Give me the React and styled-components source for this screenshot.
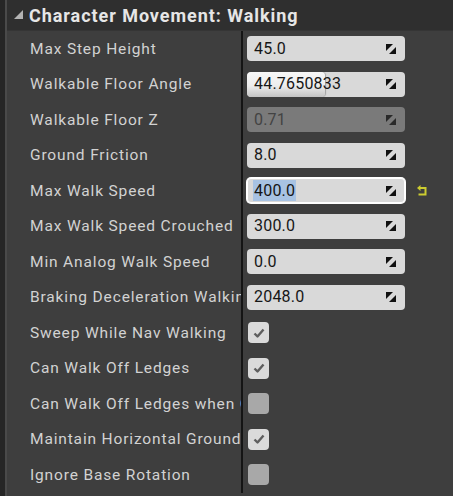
import React from "react";
import styled, { createGlobalStyle } from "styled-components";

const Global = createGlobalStyle`
  html, body { margin: 0; padding: 0; background: #3e3e3e; }
  body { font-family: Roboto, "Noto Sans", sans-serif; }
`;

const Frame = styled.div`
  width: 453px;
  height: 496px;
  box-sizing: border-box;
  border-left: 5px solid #262626;
  background: #3e3e3e;
  overflow: hidden;
`;

const Content = styled.div`
  height: 100%;
  border-left: 2px solid #4a4a4a;
  display: flex;
  flex-direction: column;
`;

const Header = styled.div`
  height: 31px;
  flex: none;
  background: #2f2f2f;
  display: flex;
  align-items: center;
  gap: 5px;
  padding-left: 3px;
  border-bottom: 1px solid #353535;
  box-sizing: border-box;
`;

const Title = styled.span`
  font-weight: 700;
  font-size: 18px;
  color: #e6e6e6;
  letter-spacing: 0.95px;
  line-height: 1;
  margin-top: 1px;
`;

const Row = styled.div`
  display: grid;
  grid-template-columns: 234px 2px 1fr;
  height: 35.5px;
  align-items: center;
`;

const Label = styled.div`
  padding-left: 23px;
  font-size: 15.5px;
  color: #d2d2d2;
  white-space: nowrap;
  overflow: hidden;
  letter-spacing: 0.85px;
  height: 100%;
  display: flex;
  align-items: center;
`;

const Divider = styled.div`
  height: 100%;
  background: #141414;
`;

const ValueCell = styled.div`
  display: flex;
  align-items: center;
  gap: 12px;
  padding-left: 4px;
`;

const NumBox = styled.div`
  position: relative;
  width: 158px;
  height: 25px;
  border-radius: 4px;
  background: ${(p) => (p.$disabled ? "#7a7a7a" : "#d9d9d9")};
  box-shadow: ${(p) =>
    p.$focused ? "0 0 0 1px #ffffff, inset 0 0 0 1px #ffffff" : "none"};
  display: flex;
  align-items: center;
  box-sizing: border-box;
  padding: 0 8px 0 7px;
  overflow: hidden;
`;

const Fill = styled.div`
  position: absolute;
  left: 0;
  top: 0;
  bottom: 0;
  border-radius: 4px;
  background: linear-gradient(#f7f7f7 0%, #ededed 55%, #c4c4c4 100%);
  box-shadow: 1px 0 1px rgba(0, 0, 0, 0.25);
`;

const NumText = styled.span`
  position: relative;
  flex: 1;
  font-size: 16px;
  letter-spacing: 0.2px;
  color: ${(p) => (p.$disabled ? "#434343" : "#161616")};
  line-height: 1;
`;

const Selected = styled.span`
  background: #a8c3e3;
  padding: 1px;
  margin-left: -1px;
`;

const CheckBox = styled.div`
  width: 21px;
  height: 21px;
  margin-left: 1px;
  border-radius: 4px;
  background: ${(p) => (p.$checked ? "#dadada" : "#a8a8a8")};
  display: flex;
  align-items: center;
  justify-content: center;
`;

const DragIcon = ({ dark }) => (
  <svg width="12" height="12" viewBox="0 0 12 12" style={{ position: "relative", flex: "none" }}>
    <polygon points="1,1 8,1 1,8" fill={dark ? "#2a2a2a" : "#111"} />
    <polygon points="11,4 11,11 4,11" fill={dark ? "#2a2a2a" : "#111"} />
  </svg>
);

const ResetIcon = () => (
  <svg width="11" height="12" viewBox="0 0 11 12">
    <polygon points="0,3 3.5,0 3.5,6" fill="#cccc30" />
    <path d="M3 3 H8.5 V9.5 H1.5" stroke="#cccc30" strokeWidth="2" fill="none" />
  </svg>
);

const CheckMark = () => (
  <svg width="14" height="12" viewBox="0 0 14 12">
    <path d="M2.5 6.5 L5.5 9.5 L11.5 2.5" stroke="#5e5e5e" strokeWidth="2.4" fill="none" strokeLinejoin="round" />
  </svg>
);

const Triangle = () => (
  <svg width="11" height="11" viewBox="0 0 11 11" style={{ marginLeft: 3, marginTop: -2 }}>
    <polygon points="10,1 10,10 1,10" fill="#b3b3b3" />
  </svg>
);

const rows = [
  { label: "Max Step Height", value: "45.0" },
  { label: "Walkable Floor Angle", value: "44.7650833", fill: 78 },
  { label: "Walkable Floor Z", value: "0.71", disabled: true },
  { label: "Ground Friction", value: "8.0" },
  { label: "Max Walk Speed", value: "400.0", focused: true },
  { label: "Max Walk Speed Crouched", value: "300.0" },
  { label: "Min Analog Walk Speed", value: "0.0" },
  { label: "Braking Deceleration Walking", value: "2048.0" },
  { label: "Sweep While Nav Walking", check: true },
  { label: "Can Walk Off Ledges", check: true },
  { label: "Can Walk Off Ledges when Crouching", check: false },
  { label: "Maintain Horizontal Ground Velocity", check: true },
  { label: "Ignore Base Rotation", check: false },
];

export default function App() {
  return (
    <>
      <Global />
      <Frame>
        <Content>
          <Header>
            <Triangle />
            <Title>Character Movement: Walking</Title>
          </Header>
          {rows.map((r) => (
            <Row key={r.label}>
              <Label title={r.label}>{r.label}</Label>
              <Divider />
              <ValueCell>
                {r.check !== undefined ? (
                  <CheckBox $checked={r.check}>{r.check && <CheckMark />}</CheckBox>
                ) : (
                  <>
                    <NumBox $disabled={r.disabled} $focused={r.focused}>
                      {r.fill && <Fill style={{ width: r.fill }} />}
                      <NumText $disabled={r.disabled}>
                        {r.focused ? <Selected>{r.value}</Selected> : r.value}
                      </NumText>
                      <DragIcon dark={r.disabled} />
                    </NumBox>
                    {r.focused && <ResetIcon />}
                  </>
                )}
              </ValueCell>
            </Row>
          ))}
        </Content>
      </Frame>
    </>
  );
}
